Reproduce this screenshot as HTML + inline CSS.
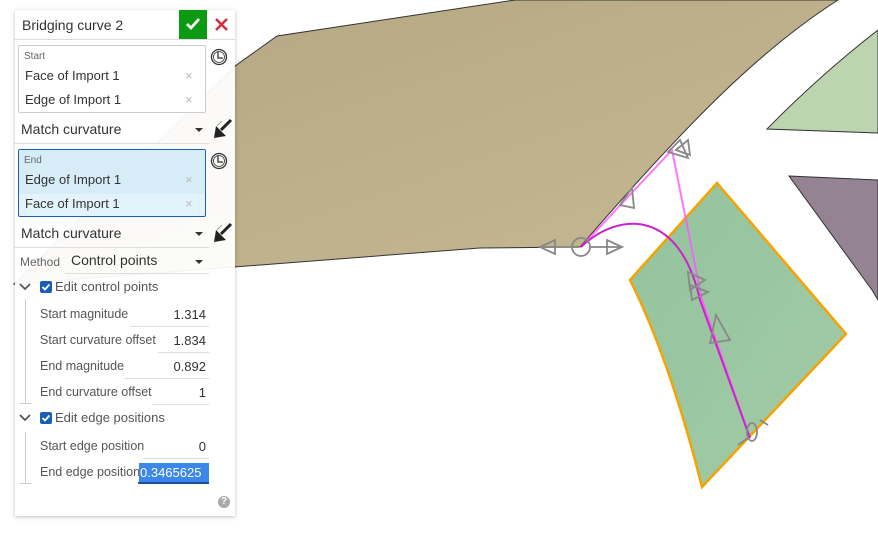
<!DOCTYPE html>
<html><head><meta charset="utf-8"><style>
*{margin:0;padding:0;box-sizing:border-box}
body{width:878px;height:546px;overflow:hidden;background:#fff;font-family:"Liberation Sans",sans-serif;position:relative;color:#333}
.abs{position:absolute}
#panel{position:absolute;left:15px;top:10px;width:220px;height:506px;background:rgba(255,255,255,0.94);box-shadow:0 1px 4px rgba(0,0,0,0.25)}
.t{position:absolute;white-space:nowrap}
.ul{position:absolute;height:1px;background:#ddd}
.x{position:absolute;color:#bbb;font-size:13px}
.lbl{font-size:12.5px;color:#555}
.val{font-size:13px;color:#333;text-align:right}
</style></head><body>
<svg class="abs" style="left:0;top:0" width="878" height="546">
<defs><linearGradient id="br" x1="0" y1="0" x2="1" y2="1"><stop offset="0" stop-color="#b3a682"/><stop offset="1" stop-color="#c7b992"/></linearGradient>
<linearGradient id="gr" x1="0" y1="0" x2="1" y2="1"><stop offset="0" stop-color="#92c39d"/><stop offset="1" stop-color="#a3cba6"/></linearGradient></defs>
<path d="M14,284 L235,66 L277,36 L515,0 L838,0 C760,50 690,120 580,247 L480,248 Z" fill="url(#br)" stroke="#333" stroke-width="1"/>
<path d="M767,129 Q820,75 878,30 L878,133 Z" fill="#bcd5b0" stroke="#333" stroke-width="1"/>
<path d="M789,176 L878,180 L878,300 L872,290 Z" fill="#938393" stroke="#333" stroke-width="1"/>
<path d="M717,183 L846,334 L702,487 Q670,360 630,280 Z" fill="url(#gr)" stroke="#f5a300" stroke-width="2.5"/>
<path d="M581,247 L672,150 L702,300 L750,438" fill="none" stroke="#ff55ff" stroke-width="2" opacity="0.8"/>
<path d="M581,247 C620,210 680,210 700,300 L750,438" fill="none" stroke="#cc22cc" stroke-width="2"/>
<g fill="none" stroke="#888" stroke-width="1.8">
<circle cx="581" cy="247" r="9"/><path d="M540,247 L572,247 M590,247 L622,247"/>
<path d="M540,247 L555,240 L555,254 Z M622,247 L607,240 L607,254 Z"/>
<path d="M620,205 L632,188 L634,208 Z M668,152 L680,140 L688,158 Z M676,150 L688,140 L690,155 Z"/>
<path d="M688,272 L705,280 L690,290 Z M690,285 L708,292 L692,300 Z M716,315 L730,340 L710,343 Z"/>
<ellipse cx="752" cy="432" rx="5" ry="9"/><path d="M738,445 L748,438 M760,420 L768,425"/>
</g>
</svg>
<div id="panel">
<div class="t" style="left:7px;top:7px;font-size:14px;color:#333">Bridging curve 2</div>
<div class="abs" style="left:164px;top:0;width:28px;height:29px;background:#0b9a12"></div>
<svg class="abs" style="left:170px;top:7px" width="16" height="14"><path d="M2,7 L6,11 L14,2" fill="none" stroke="#fff" stroke-width="2.8"/></svg>
<svg class="abs" style="left:200px;top:8px" width="13" height="13"><path d="M1,1 L12,12 M12,1 L1,12" stroke="#d0303a" stroke-width="2.6"/></svg>
<div class="ul" style="left:0;top:29px;width:220px"></div>
<div class="abs" style="left:3px;top:35px;width:188px;height:68px;border:1px solid #ccc;border-radius:2px;background:#fff"></div>
<div class="t" style="left:9px;top:41px;font-size:10px;color:#666">Start</div>
<div class="t" style="left:10px;top:58px;font-size:13px">Face of Import 1</div><div class="x" style="left:170px;top:58px">×</div>
<div class="t" style="left:10px;top:82px;font-size:13px">Edge of Import 1</div><div class="x" style="left:170px;top:82px">×</div>
<svg class="abs" style="left:195px;top:38px" width="18" height="18"><circle cx="9" cy="9" r="7.5" fill="none" stroke="#333" stroke-width="1.3"/><circle cx="9" cy="9" r="5.5" fill="none" stroke="#333" stroke-width="0.8"/><path d="M8,4 L8,10 L13,10" fill="none" stroke="#333" stroke-width="1.3"/></svg>
<div class="t" style="left:6px;top:111px;font-size:14px">Match curvature</div>
<div class="abs" style="left:180px;top:118px;border-left:4px solid transparent;border-right:4px solid transparent;border-top:4px solid #333"></div>
<div class="ul" style="left:0;top:133px;width:194px"></div>
<svg class="abs" style="left:197px;top:108px" width="22" height="22"><path d="M19,2 L9,12" stroke="#222" stroke-width="3"/><path d="M2,20 L4,8 L14,18 Z" fill="#222"/><path d="M10,3 L5,8" stroke="#aaa" stroke-width="1.2"/></svg>
<div class="abs" style="left:3px;top:139px;width:188px;height:68px;border:1px solid #1a5fb4;border-radius:2px;background:#e3f3fb"></div>
<div class="abs" style="left:4px;top:140px;width:186px;height:44px;background:#d6edf7"></div>
<div class="t" style="left:9px;top:145px;font-size:10px;color:#666">End</div>
<div class="t" style="left:10px;top:162px;font-size:13px">Edge of Import 1</div><div class="x" style="left:170px;top:162px">×</div>
<div class="t" style="left:10px;top:186px;font-size:13px">Face of Import 1</div><div class="x" style="left:170px;top:186px">×</div>
<svg class="abs" style="left:195px;top:142px" width="18" height="18"><circle cx="9" cy="9" r="7.5" fill="none" stroke="#333" stroke-width="1.3"/><circle cx="9" cy="9" r="5.5" fill="none" stroke="#333" stroke-width="0.8"/><path d="M8,4 L8,10 L13,10" fill="none" stroke="#333" stroke-width="1.3"/></svg>
<div class="t" style="left:6px;top:215px;font-size:14px">Match curvature</div>
<div class="abs" style="left:180px;top:222px;border-left:4px solid transparent;border-right:4px solid transparent;border-top:4px solid #333"></div>
<div class="ul" style="left:0;top:237px;width:194px"></div>
<svg class="abs" style="left:197px;top:212px" width="22" height="22"><path d="M19,2 L9,12" stroke="#222" stroke-width="3"/><path d="M2,20 L4,8 L14,18 Z" fill="#222"/><path d="M10,3 L5,8" stroke="#aaa" stroke-width="1.2"/></svg>
<div class="t" style="left:5px;top:245px;font-size:12px;color:#666">Method</div>
<div class="t" style="left:56px;top:242px;font-size:14px">Control points</div>
<div class="abs" style="left:180px;top:250px;border-left:4px solid transparent;border-right:4px solid transparent;border-top:4px solid #333"></div>
<div class="ul" style="left:50px;top:263px;width:144px"></div>
<svg class="abs" style="left:4px;top:272px" width="14" height="10"><path d="M1,2 L6,7 L11,2" fill="none" stroke="#555" stroke-width="1.8"/></svg>
<div class="abs" style="left:25px;top:271px;width:12px;height:12px;background:#1a5fb4;border-radius:2px"></div>
<svg class="abs" style="left:25px;top:271px" width="12" height="12"><path d="M2.5,6 L5,8.5 L9.5,3.5" fill="none" stroke="#fff" stroke-width="1.8"/></svg>
<div class="t" style="left:40px;top:269px;font-size:13px;color:#555">Edit control points</div>
<div class="abs" style="left:10px;top:289px;width:1px;height:104px;background:#ccc"></div>
<div class="abs" style="left:5px;top:393px;width:11px;height:1px;background:#ccc"></div>
<div class="t lbl" style="left:25px;top:297px">Start magnitude</div><div class="t val" style="right:29px;top:297px">1.314</div><div class="ul" style="left:115px;top:316px;width:79px"></div>
<div class="t lbl" style="left:25px;top:323px">Start curvature offset</div><div class="t val" style="right:29px;top:323px">1.834</div><div class="ul" style="left:143px;top:342px;width:51px"></div>
<div class="t lbl" style="left:25px;top:349px">End magnitude</div><div class="t val" style="right:29px;top:349px">0.892</div><div class="ul" style="left:109px;top:368px;width:85px"></div>
<div class="t lbl" style="left:25px;top:375px">End curvature offset</div><div class="t val" style="right:29px;top:375px">1</div><div class="ul" style="left:137px;top:394px;width:57px"></div>
<svg class="abs" style="left:4px;top:403px" width="14" height="10"><path d="M1,2 L6,7 L11,2" fill="none" stroke="#555" stroke-width="1.8"/></svg>
<div class="abs" style="left:25px;top:402px;width:12px;height:12px;background:#1a5fb4;border-radius:2px"></div>
<svg class="abs" style="left:25px;top:402px" width="12" height="12"><path d="M2.5,6 L5,8.5 L9.5,3.5" fill="none" stroke="#fff" stroke-width="1.8"/></svg>
<div class="t" style="left:40px;top:400px;font-size:13px;color:#555">Edit edge positions</div>
<div class="abs" style="left:10px;top:422px;width:1px;height:51px;background:#ccc"></div>
<div class="abs" style="left:5px;top:473px;width:11px;height:1px;background:#ccc"></div>
<div class="t lbl" style="left:25px;top:429px">Start edge position</div><div class="t val" style="right:29px;top:429px">0</div><div class="ul" style="left:129px;top:448px;width:65px"></div>
<div class="t lbl" style="left:25px;top:455px">End edge position</div>
<div class="abs" style="left:124px;top:453px;width:70px;height:20px;background:#3b87ea"></div>
<div class="t" style="left:125px;top:455px;font-size:13px;color:#fff;width:69px;overflow:hidden">0.3465625</div>
<div class="abs" style="left:123px;top:472px;width:71px;height:2px;background:#1a4f9c"></div>
<div class="abs" style="left:203px;top:486px;width:12px;height:12px;border-radius:50%;background:#aaa;color:#fff;font-size:10px;font-weight:bold;text-align:center;line-height:12px">?</div>
</div>
</body></html>
